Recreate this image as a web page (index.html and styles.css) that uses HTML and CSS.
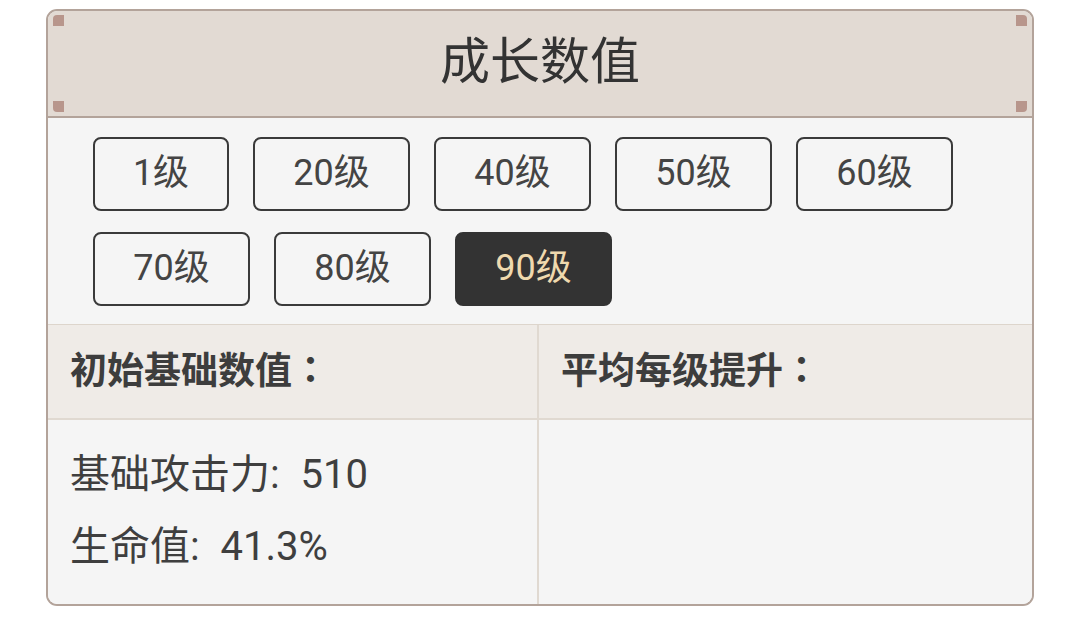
FILE: index.html
```html
<!DOCTYPE html>
<html lang="zh-CN">
<head>
<meta charset="utf-8">
<title>成长数值</title>
<link rel="stylesheet" href="styles.css">
</head>
<body>
<div class="card">
  <div class="card-head">
    <span class="dot dot-tl"></span>
    <span class="dot dot-tr"></span>
    <span class="dot dot-bl"></span>
    <span class="dot dot-br"></span>
    <h1 class="title">成长数值</h1>
  </div>
  <div class="levels">
    <button class="lv lv-narrow">1级</button>
    <button class="lv">20级</button>
    <button class="lv">40级</button>
    <button class="lv">50级</button>
    <button class="lv">60级</button>
    <button class="lv">70级</button>
    <button class="lv">80级</button>
    <button class="lv active">90级</button>
  </div>
  <div class="stats">
    <div class="cell head">初始基础数值<span class="fw-colon">：</span></div>
    <div class="cell head">平均每级提升<span class="fw-colon">：</span></div>
    <div class="cell body">
      <div class="line">基础攻击力<span class="sep">:</span> 510</div>
      <div class="line">生命值<span class="sep">:</span> 41.3%</div>
    </div>
    <div class="cell body"></div>
  </div>
</div>
</body>
</html>
```
FILE: styles.css
```css
* { box-sizing: border-box; }
html, body { margin: 0; padding: 0; background: #ffffff; }
body {
  font-family: Roboto, "Noto Sans CJK SC", sans-serif;
  color: #3d3d3d;
}
.card {
  margin: 9px 0 0 46px;
  width: 988px;
  height: 597px;
  border: 2px solid #b3a39a;
  border-radius: 11px;
  overflow: hidden;
  background: #f5f5f5;
  display: flex;
  flex-direction: column;
}
.card-head {
  position: relative;
  height: 107px;
  flex: none;
  background: #e2dad3;
  border-bottom: 2px solid #b3a39a;
  display: flex;
  align-items: center;
  justify-content: center;
}
.title {
  margin: 0;
  font-size: 50px;
  font-weight: 400;
  color: #333333;
  padding-bottom: 14px;
}
.dot {
  position: absolute;
  width: 11px;
  height: 11px;
  background: #b8968c;
}
.dot-tl { top: 4px; left: 5px; border-top-left-radius: 4px; }
.dot-tr { top: 4px; right: 5px; border-top-right-radius: 4px; }
.dot-bl { bottom: 4px; left: 5px; border-bottom-left-radius: 4px; }
.dot-br { bottom: 4px; right: 5px; border-bottom-right-radius: 4px; }
.levels {
  flex: none;
  display: flex;
  flex-wrap: wrap;
  column-gap: 24px;
  row-gap: 21px;
  padding: 19px 40px 18px 45px;
  border-bottom: 1px solid #ddd5cc;
}
.lv {
  width: 157px;
  height: 74px;
  border: 2px solid #3a3a3a;
  border-radius: 8px;
  background: #f5f5f5;
  color: #444444;
  font-family: Roboto, "Noto Sans CJK SC", sans-serif;
  font-size: 36px;
  padding: 0 0 10px 0;
  display: flex;
  align-items: center;
  justify-content: center;
}
.lv-narrow { width: 136px; }
.lv.active {
  background: #333333;
  border-color: #333333;
  color: #efd9ae;
}
.stats {
  flex: 1;
  display: grid;
  grid-template-columns: 491px 1fr;
  grid-template-rows: 95px 1fr;
}
.cell.head {
  background: #efebe7;
  border-bottom: 2px solid #e0d9d1;
  font-weight: 700;
  font-size: 37px;
  color: #3d3d3d;
  display: flex;
  align-items: center;
  padding: 0 0 8px 22px;
}
.fw-colon { font-family: "Noto Sans CJK TC", "Noto Sans CJK SC", sans-serif; }
.cell:nth-child(odd) { border-right: 2px solid #e0d9d1; }
.cell.body {
  background: #f5f5f5;
  padding: 19px 0 0 22px;
  font-size: 40px;
  color: #3f3f3f;
}
.line { height: 72px; line-height: 72px; }
.sep { margin-right: 11px; }
```
